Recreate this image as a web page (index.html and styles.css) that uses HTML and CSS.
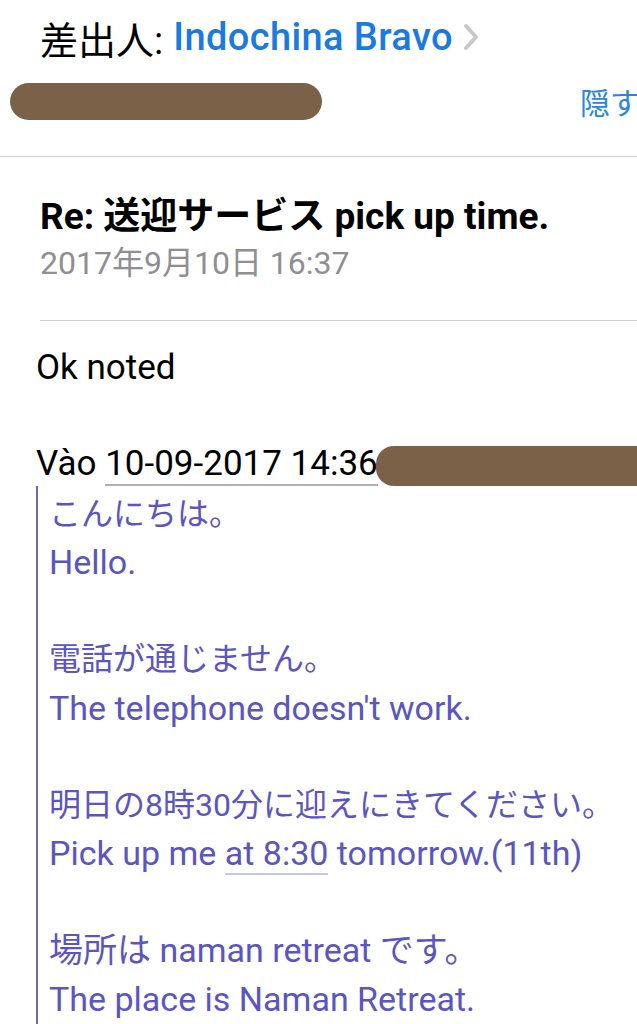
FILE: index.html
```html
<!DOCTYPE html>
<html lang="ja">
<head>
    <meta charset="UTF-8">
    <meta name="viewport" content="width=device-width, initial-scale=1.0">
    <title>Re: 送迎サービス pick up time.</title>
    <link rel="stylesheet" href="styles.css">
</head>
<body>
    <!-- Cabecera del correo -->
    <div class="mail-header">
        <div class="from-row">
            <span class="label">差出人:</span>
            <span class="sender">Indochina Bravo</span>
            <svg class="chevron" width="18" height="28" viewBox="0 0 18 28">
                <path d="M4 3 L14 14 L4 25" fill="none" stroke="#c7c7cc" stroke-width="4" stroke-linecap="round" stroke-linejoin="round"/>
            </svg>
        </div>
        <div class="to-row">
            <span class="redact redact-to"></span>
            <span class="hide-link">隠す</span>
        </div>
    </div>

    <div class="subject-block">
        <div class="subject">Re: 送迎サービス pick up time.</div>
        <div class="date">2017年9月10日 16:37</div>
    </div>

    <!-- Cuerpo -->
    <div class="mail-body">
        <p class="reply">Ok noted</p>
        <p class="quote-intro">Vào <span class="linked">10-09-2017 14:36</span><span class="redact redact-from"></span></p>
        <blockquote class="quoted">
            <div class="ja">こんにちは。</div>
            <div>Hello.</div>
            <div class="gap"></div>
            <div class="ja">電話が通じません。</div>
            <div>The telephone doesn't work.</div>
            <div class="gap"></div>
            <div class="ja">明日の8時30分に迎えにきてください。</div>
            <div>Pick up me <span class="linked-soft">at 8:30</span> tomorrow.(11th)</div>
            <div class="gap"></div>
            <div>場所は naman retreat です。</div>
            <div>The place is Naman Retreat.</div>
        </blockquote>
    </div>
</body>
</html>
```

FILE: styles.css
```css
body {
    margin: 0;
    width: 637px;
    height: 1024px;
    overflow: hidden;
    background: #fff;
    font-family: Roboto, "Noto Sans CJK JP", sans-serif;
    color: #000;
}
.mail-header {
    padding-left: 40px;
    border-bottom: 1px solid #d0d0d0;
}
.from-row {
    display: flex;
    align-items: center;
    height: 40px;
    padding-top: 17px;
    font-size: 38px;
    white-space: nowrap;
}
.from-row .label {
    margin-right: 10px;
}
.sender {
    color: #1a7ae0;
    font-weight: 500;
    letter-spacing: 0.4px;
}
.chevron {
    margin-left: 9px;
}
.to-row {
    display: flex;
    align-items: center;
    height: 40px;
    margin: 24px 0 35px -30px;
}
.redact {
    display: inline-block;
    background: #7a6148;
    border-radius: 20px;
}
.redact-to {
    width: 312px;
    height: 37px;
    flex-shrink: 0;
}
.hide-link {
    color: #2a85e0;
    font-size: 30px;
    margin-left: 258px;
    white-space: nowrap;
}
.subject-block {
    margin-left: 40px;
    padding: 40px 0 39px;
    border-bottom: 1px solid #d0d0d0;
}
.subject {
    font-size: 37px;
    font-weight: 700;
    line-height: 40px;
    white-space: nowrap;
}
.date {
    font-size: 32px;
    color: #8e8e93;
    line-height: 36px;
    margin-top: 8px;
}
.mail-body {
    padding-left: 36px;
}
.reply {
    margin: 27px 0 0;
    font-size: 35px;
    line-height: 40px;
}
.quote-intro {
    margin: 56px 0 0;
    font-size: 35px;
    line-height: 40px;
    white-space: nowrap;
}
.linked {
    border-bottom: 2px solid #b0b0b0;
}
.redact-from {
    width: 290px;
    height: 40px;
    vertical-align: middle;
    margin-left: -2px;
    border-radius: 18px;
}
.quoted {
    margin: 0;
    padding: 4px 0 0 11px;
    border-left: 2px solid #6e68b8;
    color: #5b55c2;
    font-size: 34px;
    line-height: 48.5px;
    height: 600px;
    white-space: nowrap;
}
.quoted .ja {
    font-size: 32px;
}
.quoted .gap {
    height: 48.5px;
}
.linked-soft {
    border-bottom: 2px solid #c8c6e6;
}
```
